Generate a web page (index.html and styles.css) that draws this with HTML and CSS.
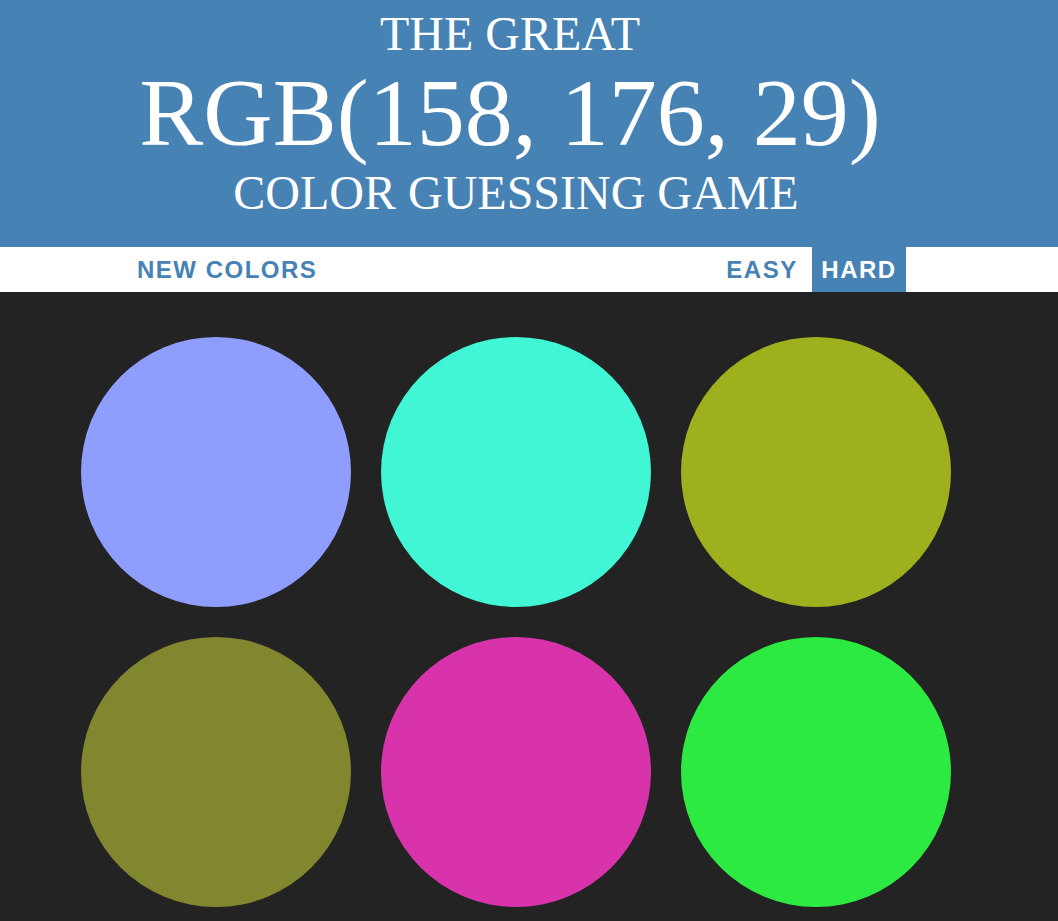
FILE: index.html
```html
<!DOCTYPE html>
<html lang="en">
<head>
<meta charset="utf-8">
<title>Color Game</title>
<link rel="stylesheet" href="styles.css">
</head>
<body>
<h1 class="title">
  <span class="title-line shifted">THE GREAT</span>
  <span class="title-rgb shifted">RGB(158, 176, 29)</span>
  <span class="title-line">COLOR GUESSING GAME</span>
</h1>
<div class="stripe">
  <div class="stripe-inner">
    <button class="btn">New Colors</button>
    <span class="message"></span>
    <div class="modes">
      <button class="btn mode">Easy</button>
      <button class="btn mode selected">Hard</button>
    </div>
  </div>
</div>
<div class="board">
  <div class="square sq1"></div>
  <div class="square sq2"></div>
  <div class="square sq3"></div>
  <div class="square sq4"></div>
  <div class="square sq5"></div>
  <div class="square sq6"></div>
</div>
</body>
</html>
```
FILE: styles.css
```css
html, body {
  margin: 0;
  padding: 0;
  background: #232323;
  height: 100%;
  overflow: hidden;
}
body {
  font-family: "Liberation Sans", Arial, sans-serif;
}
.title {
  margin: 0;
  background: #4682b4;
  color: #fff;
  font-family: "Liberation Serif", "Times New Roman", serif;
  font-weight: normal;
  font-size: 48px;
  text-align: center;
  padding: 7px 26px 28px 0;
  display: flex;
  flex-direction: column;
  align-items: center;
}
.title-line {
  display: block;
  line-height: 53px;
}
.title-rgb {
  display: block;
  font-size: 96px;
  line-height: 106px;
}
.shifted {
  padding-right: 12px;
}
.stripe {
  background: #fff;
  height: 45px;
  display: flex;
  justify-content: center;
  padding-right: 24px;
}
.stripe-inner {
  width: 778px;
  display: flex;
  align-items: stretch;
}
.message {
  flex: 1;
}
.modes {
  display: flex;
  gap: 3px;
}
.btn {
  border: none;
  background: none;
  margin: 0;
  padding: 0 10px;
  height: 45px;
  font-family: "Liberation Sans", Arial, sans-serif;
  font-weight: 700;
  font-size: 24px;
  letter-spacing: 1.5px;
  text-transform: uppercase;
  color: #4682b4;
  cursor: pointer;
  outline: none;
}
.btn:first-child {
  margin-left: -1px;
}
.mode {
  width: 94px;
  padding: 0;
}
.mode.selected {
  background: #4682b4;
  color: #fff;
}
.board {
  width: 900px;
  margin: 30px auto 0;
  padding-right: 26px;
  display: flex;
  flex-wrap: wrap;
  box-sizing: content-box;
}
.square {
  width: 270px;
  height: 270px;
  margin: 15px;
  border-radius: 50%;
}
.sq1 { background: rgb(143, 158, 253); }
.sq2 { background: rgb(64, 246, 212); }
.sq3 { background: rgb(158, 176, 29); }
.sq4 { background: rgb(128, 135, 46); }
.sq5 { background: rgb(217, 51, 172); }
.sq6 { background: rgb(45, 234, 66); }
```
